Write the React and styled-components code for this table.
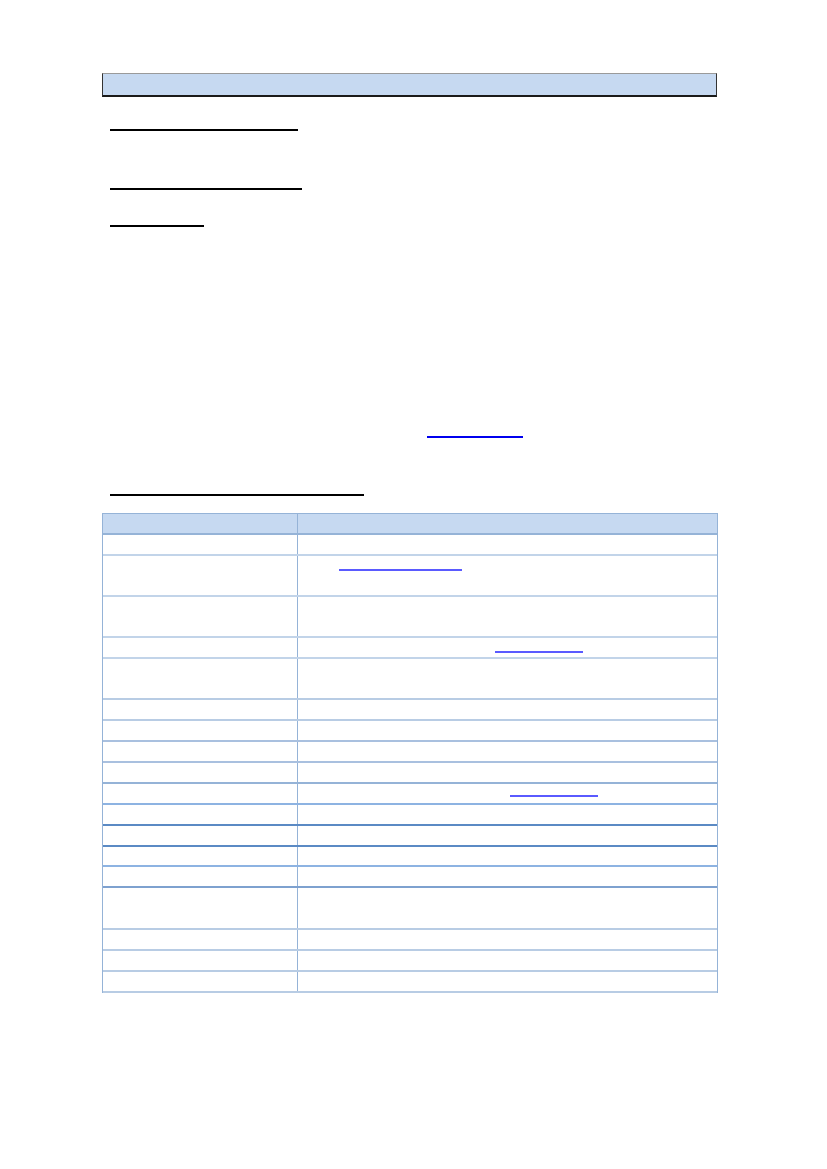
import styled, { createGlobalStyle } from "styled-components";

const Global = createGlobalStyle`
  html, body { margin: 0; padding: 0; background: #fff; }
  body { font-family: "Liberation Sans", Arial, sans-serif; }
`;

const Page = styled.main`
  width: 827px;
  min-height: 1169px;
  box-sizing: border-box;
  padding: 73px 0 0 102px;
  display: flex;
  flex-direction: column;
`;

const TitleBox = styled.div`
  width: 615px;
  height: 24px;
  box-sizing: border-box;
  background: #c6d9f1;
  border-top: 1px solid #9a9a9a;
  border-left: 1px solid #333;
  border-right: 1px solid #333;
  border-bottom: 2px solid #1a1a1a;
`;

const Underline = styled.div`
  margin-top: ${(p) => p.$top}px;
  margin-left: ${(p) => p.$left}px;
  width: ${(p) => p.$width}px;
  height: 2px;
  background: ${(p) => (p.$link ? "#0000ee" : "#000")};
`;

const Table = styled.div`
  margin-top: ${(p) => p.$top}px;
  width: 616px;
  box-sizing: border-box;
  border-top: 1px solid #95b3d7;
  border-left: 1px solid #95b3d7;
  border-right: 1px solid #95b3d7;
  display: flex;
  flex-direction: column;
`;

const Row = styled.div`
  display: grid;
  grid-template-columns: 195px 1fr;
  height: ${(p) => p.$h}px;
  box-sizing: border-box;
  border-bottom: 2px solid ${(p) => p.$line};
  background: ${(p) => (p.$head ? "#c6d9f1" : "#fff")};
`;

const Cell = styled.div`
  border-right: ${(p) => (p.$first ? "1px solid #95b3d7" : "none")};
`;

const CellLink = styled.div`
  margin-top: ${(p) => p.$top}px;
  margin-left: ${(p) => p.$left}px;
  width: ${(p) => p.$width}px;
  height: 2px;
  background: #5a5aff;
`;

const rows = [
  { h: 21, line: "#95b3d7", head: true },
  { h: 21, line: "#c2d4e9" },
  { h: 41, line: "#c2d4e9", link: { top: 13, left: 41, width: 123 } },
  { h: 41, line: "#c2d4e9" },
  { h: 21, line: "#c2d4e9", link: { top: 13, left: 197, width: 88 } },
  { h: 41, line: "#b8cce4" },
  { h: 21, line: "#b8cce4" },
  { h: 21, line: "#a9c0df" },
  { h: 21, line: "#a9c0df" },
  { h: 21, line: "#95b3d7" },
  { h: 21, line: "#8db3e2", link: { top: 11, left: 212, width: 88 } },
  { h: 21, line: "#5b8ac4" },
  { h: 21, line: "#5b8ac4" },
  { h: 20, line: "#8db3e2" },
  { h: 21, line: "#7ea1cf" },
  { h: 42, line: "#b8cce4" },
  { h: 21, line: "#b8cce4" },
  { h: 21, line: "#b8cce4" },
  { h: 21, line: "#b8cce4" },
];

const App = () => {
  return (
    <>
      <Global />
      <Page>
        <TitleBox />
        <Underline $top={32} $left={8} $width={188} />
        <Underline $top={57} $left={8} $width={192} />
        <Underline $top={35} $left={8} $width={94} />
        <Underline $top={209} $left={325} $width={96} $link />
        <Underline $top={56} $left={8} $width={254} />
        <Table $top={17}>
          {rows.map((r, i) => (
            <Row key={i} $h={r.h} $line={r.line} $head={r.head}>
              <Cell $first />
              <Cell>
                {r.link && (
                  <CellLink
                    $top={r.link.top}
                    $left={r.link.left}
                    $width={r.link.width}
                  />
                )}
              </Cell>
            </Row>
          ))}
        </Table>
      </Page>
    </>
  );
};

export default App;
